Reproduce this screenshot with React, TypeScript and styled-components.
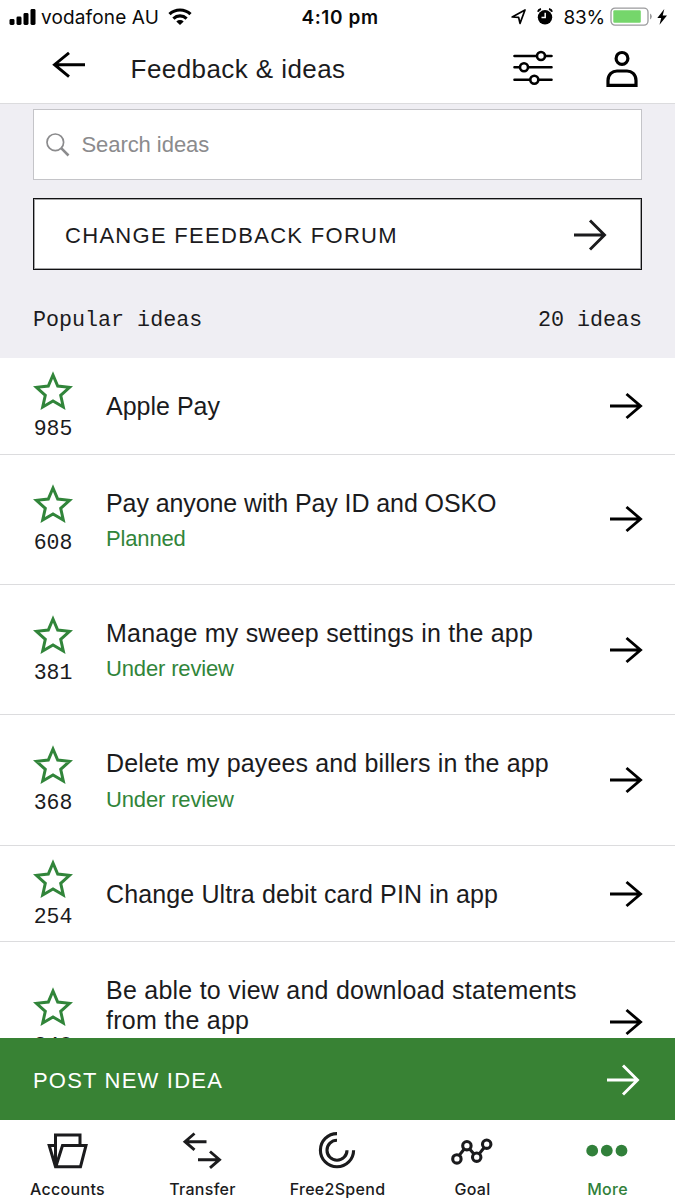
import React from "react";
import styled, { createGlobalStyle } from "styled-components";

const sans = `"Liberation Sans", Arial, sans-serif`;
const inter = `Inter, "Liberation Sans", sans-serif`;
const mono = `"Liberation Mono", monospace`;
const green = "#388234";

const GlobalStyle = createGlobalStyle`
  * { box-sizing: border-box; }
  html, body { margin: 0; padding: 0; background: #fff; }
  svg { display: block; flex: none; }
`;

const Screen = styled.div`
  width: 675px;
  height: 1200px;
  display: flex;
  flex-direction: column;
  overflow: hidden;
  background: #fff;
  color: #1b1b1d;
  font-family: ${sans};
`;

const StatusBar = styled.div`
  height: 34px;
  flex: none;
  display: grid;
  grid-template-columns: 1fr auto 1fr;
  align-items: center;
  padding: 0 7px 0 9px;
  font-family: ${inter};
  font-size: 19px;
  color: #0a0a0a;
`;

const StatusGroup = styled.div<{ $end?: boolean }>`
  display: flex;
  align-items: center;
  justify-content: ${(p) => (p.$end ? "flex-end" : "flex-start")};
`;

const Carrier = styled.span`
  margin: 0 9px 0 5px;
  letter-spacing: 0.15px;
`;

const Clock = styled.span`
  font-weight: 600;
  letter-spacing: 0.6px;
  margin-left: 3px;
`;

const Percent = styled.span`
  margin: 0 5px 0 10px;
  letter-spacing: -0.2px;
`;

const Header = styled.header`
  height: 70px;
  flex: none;
  display: flex;
  align-items: flex-start;
  padding: 16px 36px 0 52px;
  border-bottom: 1px solid #dcdcde;
`;

const PageTitle = styled.h1`
  flex: 1;
  margin: 3px 0 0 44.6px;
  font-size: 26px;
  line-height: 32px;
  font-weight: 400;
  letter-spacing: 0.42px;
`;

const HeaderActions = styled.div`
  display: flex;
  align-items: flex-start;
  gap: 52px;
`;

const Filters = styled.section`
  flex: none;
  height: 254px;
  padding: 5px 33px 0;
  background: #efeef3;
`;

const SearchBox = styled.div`
  height: 71px;
  display: flex;
  align-items: center;
  gap: 11.4px;
  padding-left: 12px;
  border: 1px solid #c4c4c8;
  background: #fff;
  color: #8b8b8d;
  font-size: 22px;
  letter-spacing: -0.05px;
`;

const ForumButton = styled.button`
  width: 100%;
  height: 72px;
  margin: 18px 0 0;
  padding: 2px 34px 0 31px;
  display: flex;
  align-items: center;
  justify-content: space-between;
  border: 1px solid #111113;
  border-radius: 0;
  box-shadow: inset 0 0 0 1px #a4a4a6;
  background: #fff;
  color: #1b1b1d;
  font-family: ${sans};
  font-size: 22px;
  letter-spacing: 1.3px;
`;

const ButtonLabel = styled.span`
  padding-top: 2px;
`;

const ListHeading = styled.div`
  display: flex;
  justify-content: space-between;
  margin-top: 37px;
  font-family: ${mono};
  font-size: 21.7px;
  line-height: 28px;
`;

const IdeaList = styled.main`
  flex: 1;
  min-height: 0;
  overflow: hidden;
`;

const IdeaRow = styled.article`
  display: flex;
  align-items: center;
  padding: 32.9px 32px 32.9px 33px;
  border-bottom: 1px solid #dcdcde;
`;

const Votes = styled.div`
  width: 40px;
  flex: none;
  height: 67.5px;
  margin: -20px 33px -17.5px 0;
  display: flex;
  flex-direction: column;
  align-items: center;
  justify-content: space-between;
  font-family: ${mono};
  font-size: 21.5px;
  line-height: 18px;
`;

const IdeaText = styled.div`
  flex: 1;
`;

const IdeaTitle = styled.h2<{ $tracking: number }>`
  margin: 0;
  font-size: 25px;
  line-height: 30px;
  font-weight: 400;
  letter-spacing: ${(p) => p.$tracking}px;
`;

const IdeaStatus = styled.p`
  margin: 8.5px 0 0;
  min-height: 25px;
  font-size: 22px;
  line-height: 25px;
  letter-spacing: -0.15px;
  color: #31853a;
`;

const PostBar = styled.button`
  flex: none;
  height: 82px;
  width: 100%;
  margin: 0;
  padding: 2px 35px 0 33px;
  display: flex;
  align-items: center;
  justify-content: space-between;
  border: 0;
  background: ${green};
  color: #fff;
  font-family: ${sans};
  font-size: 22px;
  letter-spacing: 1.2px;
`;

const TabBar = styled.nav`
  flex: none;
  height: 80px;
  display: grid;
  grid-template-columns: repeat(5, 1fr);
  background: #fff;
`;

const Tab = styled.div<{ $active?: boolean }>`
  display: flex;
  flex-direction: column;
  align-items: center;
  padding-top: 10px;
  gap: 7px;
  font-family: ${inter};
  font-size: 16px;
  font-weight: 500;
  line-height: 24px;
  letter-spacing: 0.3px;
  color: ${(p) => (p.$active ? "#31803a" : "#1b1b1d")};

  svg {
    margin-right: 1.4px;
  }
`;

const RowArrow = () => (
  <svg width="34" height="30" viewBox="0 0 34 30" fill="none" stroke="#000" strokeWidth="2.9">
    <path d="M1 15H31M17.5 3L31.5 15L17.5 27" />
  </svg>
);

const ButtonArrow = () => (
  <svg width="34" height="34" viewBox="0 0 34 34" fill="none" stroke="currentColor" strokeWidth="2.9">
    <path d="M1 17H31M17 2.5L31.5 17L17 31.5" />
  </svg>
);

const Star = () => (
  <svg width="40" height="40" viewBox="0 0 40 40" fill="none" stroke="#31853a" strokeWidth="3">
    <path d="M20 4L24.7 15.1L36.6 16.3L27.7 24.3L30.3 36L20 30L9.7 36L12.3 24.3L3.4 16.3L15.3 15.1Z" />
  </svg>
);

type Idea = { votes: number; title: string; status?: string; tracking: number };

const ideas: Idea[] = [
  { votes: 985, title: "Apple Pay", tracking: 0 },
  { votes: 608, title: "Pay anyone with Pay ID and OSKO", status: "Planned", tracking: -0.09 },
  { votes: 381, title: "Manage my sweep settings in the app", status: "Under review", tracking: 0.21 },
  { votes: 368, title: "Delete my payees and billers in the app", status: "Under review", tracking: 0.13 },
  { votes: 254, title: "Change Ultra debit card PIN in app", tracking: 0.13 },
  { votes: 248, title: "Be able to view and download statements from the app", status: "", tracking: 0.24 },
];

export default function App() {
  return (
    <>
      <GlobalStyle />
      <Screen>
        <StatusBar>
          <StatusGroup>
            <svg width="27" height="18" viewBox="0 0 27 18" fill="#000">
              <rect x="0.5" y="11" width="5" height="6" rx="1.4" />
              <rect x="7.5" y="8.5" width="5" height="8.5" rx="1.4" />
              <rect x="14.5" y="5" width="5" height="12" rx="1.4" />
              <rect x="21.5" y="1" width="5" height="16" rx="1.4" />
            </svg>
            <Carrier>vodafone AU</Carrier>
            <svg width="24" height="18" viewBox="0 0 24 18" fill="none" stroke="#000" strokeWidth="3.2">
              <path d="M1.5 6.2A15.2 15.2 0 0 1 22.5 6.2" />
              <path d="M5.4 10.6A9.6 9.6 0 0 1 18.6 10.6" />
              <path d="M12 17L8.3 13.4A5.4 5.4 0 0 1 15.7 13.4Z" fill="#000" stroke="none" />
            </svg>
          </StatusGroup>
          <Clock>4:10 pm</Clock>
          <StatusGroup $end>
            <svg width="44" height="18" viewBox="0 0 44 18">
              <path d="M3.2 9L16 2L11 15.4L9.6 9.3Z" fill="none" stroke="#000" strokeWidth="1.7" strokeLinejoin="round" />
              <circle cx="36" cy="9.3" r="7.2" fill="#000" />
              <path d="M29 3.8Q29.5 1.6 32 1.1M43 3.8Q42.5 1.6 40 1.1" fill="none" stroke="#000" strokeWidth="2" />
              <path d="M36.2 4.8V9.5H32.5" fill="none" stroke="#fff" strokeWidth="1.5" />
            </svg>
            <Percent>83%</Percent>
            <svg width="58" height="20" viewBox="0 0 58 20">
              <rect x="1" y="1.1" width="37" height="17" rx="4" fill="#fff" stroke="#9b9b9d" strokeWidth="1.3" />
              <rect x="3.3" y="3.3" width="27.5" height="12.5" rx="1.2" fill="#75d66b" />
              <path d="M40 6.5Q41.8 7.3 41.8 9.5T40 12.5Z" fill="#9b9b9d" />
              <path d="M54.3 2L47.3 11H51.2L49.5 17.7L57 8.6H52.7Z" fill="#000" />
            </svg>
          </StatusGroup>
        </StatusBar>

        <Header>
          <svg width="34" height="30" viewBox="0 0 34 30" fill="none" stroke="#000" strokeWidth="2.9">
            <path d="M33 14.7H2.5M17 2.8L2.5 14.7L17 26.6" />
          </svg>
          <PageTitle>Feedback &amp; ideas</PageTitle>
          <HeaderActions>
            <svg width="40" height="38" viewBox="0 0 40 38" fill="#fff" stroke="#000" strokeWidth="2.6" strokeLinecap="round">
              <path d="M1.5 6H38.5M1.5 17.3H38.5M1.5 29.7H38.5" />
              <circle cx="28" cy="6" r="4" />
              <circle cx="11" cy="17.3" r="4" />
              <circle cx="21.3" cy="29.7" r="4" />
            </svg>
            <svg width="34" height="38" viewBox="0 0 34 38" fill="none" stroke="#000" strokeWidth="3.2">
              <circle cx="17" cy="8.4" r="5.9" />
              <path d="M3 35.4V30.5C3 24.3 7.5 21 12 21H22C26.5 21 31 24.3 31 30.5V35.4Z" />
            </svg>
          </HeaderActions>
        </Header>

        <Filters>
          <SearchBox>
            <svg width="24" height="24" viewBox="0 0 24 24" fill="none" stroke="#8b8b8d">
              <circle cx="9.3" cy="9.3" r="8.3" strokeWidth="1.7" />
              <path d="M15.2 15.2L22.5 22.5" strokeWidth="2.6" />
            </svg>
            <span>Search ideas</span>
          </SearchBox>
          <ForumButton>
            <ButtonLabel>CHANGE FEEDBACK FORUM</ButtonLabel>
            <ButtonArrow />
          </ForumButton>
          <ListHeading>
            <span>Popular ideas</span>
            <span>20 ideas</span>
          </ListHeading>
        </Filters>

        <IdeaList>
          {ideas.map((idea) => (
            <IdeaRow key={idea.votes}>
              <Votes>
                <Star />
                {idea.votes}
              </Votes>
              <IdeaText>
                <IdeaTitle $tracking={idea.tracking}>{idea.title}</IdeaTitle>
                {idea.status !== undefined && <IdeaStatus>{idea.status}</IdeaStatus>}
              </IdeaText>
              <RowArrow />
            </IdeaRow>
          ))}
        </IdeaList>

        <PostBar>
          <ButtonLabel>POST NEW IDEA</ButtonLabel>
          <ButtonArrow />
        </PostBar>

        <TabBar>
          <Tab>
            <svg width="42" height="40" viewBox="0 0 42 40" fill="none" stroke="#1b1b1d" strokeWidth="3">
              <path d="M9.5 37V5H34V15" />
              <path d="M9.5 15.5H3.2L9.5 36.7H34.5L40 15.5H16.5L9.8 36.7" />
            </svg>
            Accounts
          </Tab>
          <Tab>
            <svg width="42" height="40" viewBox="0 0 42 40" fill="none" stroke="#1b1b1d" strokeWidth="2.9">
              <path d="M25.5 11.7H4M13.5 3.5L4 11.7L13.5 19.9" />
              <path d="M17 29.7H38.5M29 21.5L38.5 29.7L29 37.9" />
            </svg>
            Transfer
          </Tab>
          <Tab>
            <svg width="42" height="40" viewBox="0 0 42 40" fill="none" stroke="#1b1b1d" strokeWidth="3.1">
              <path d="M21 3.6A16.6 16.6 0 1 0 37.6 20.2" />
              <path d="M21 10.2A10 10 0 1 0 31 20.2" />
            </svg>
            Free2Spend
          </Tab>
          <Tab>
            <svg width="42" height="40" viewBox="0 0 42 40" fill="none" stroke="#1b1b1d" strokeWidth="3.1">
              <circle cx="5.9" cy="28.9" r="4.2" />
              <circle cx="15.9" cy="15.7" r="4.2" />
              <circle cx="25.7" cy="27.2" r="4.2" />
              <circle cx="35.7" cy="14.2" r="4.2" />
              <path d="M8.2 25.4L13.2 19M18.4 18.8L23 24.1M28.2 23.9L33.2 17.5" />
            </svg>
            Goal
          </Tab>
          <Tab $active>
            <svg width="42" height="40" viewBox="0 0 42 40" fill="#31803a">
              <circle cx="6.2" cy="20.7" r="5.9" />
              <circle cx="20.8" cy="20.7" r="5.9" />
              <circle cx="35.5" cy="20.7" r="5.9" />
            </svg>
            More
          </Tab>
        </TabBar>
      </Screen>
    </>
  );
}
